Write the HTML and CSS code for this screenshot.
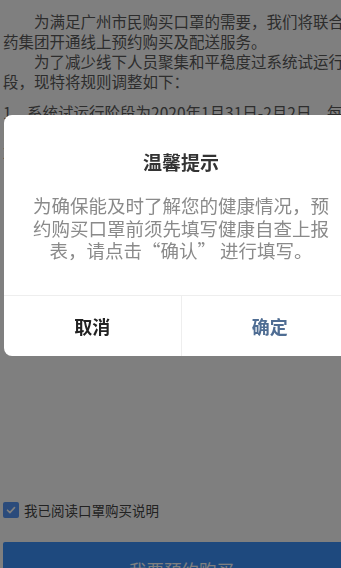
FILE: index.html
```html
<!DOCTYPE html>
<html lang="zh-CN">
<head>
<meta charset="utf-8">
<title>温馨提示</title>
<link rel="stylesheet" href="styles.css">
</head>
<body>
<div class="page">
  <div class="notice">
    <p>为满足广州市民购买口罩的需要，我们将联合广药集团开通线上预约购买及配送服务。</p>
    <p>为了减少线下人员聚集和平稳度过系统试运行阶段，现特将规则调整如下：</p>
  </div>
  <ol class="rules">
    <li>1、系统试运行阶段为2020年1月31日-2月2日，每天限量预约，先到先得。</li>
    <li>2、每人每次限预约一次，每次限购5个。</li>
  </ol>
  <div class="footer">
    <label class="agree">
      <span class="box"><svg viewBox="0 0 16 16" width="16" height="16"><path d="M4.5 8.2l2.4 2.4 4.6-5" fill="none" stroke="#fff" stroke-width="1.6" stroke-linecap="round" stroke-linejoin="round"/></svg></span>
      <span class="agree-text">我已阅读口罩购买说明</span>
    </label>
    <button class="reserve">我要预约购买</button>
  </div>
</div>
<div class="overlay"></div>
<div class="dialog">
  <div class="dialog-body">
    <h2 class="dialog-title">温馨提示</h2>
    <p class="dialog-msg">为确保能及时了解您的健康情况，预约购买口罩前须先填写健康自查上报表，请点击“确认” 进行填写。</p>
  </div>
  <div class="dialog-actions">
    <div class="action cancel">取消</div>
    <div class="action confirm">确定</div>
  </div>
</div>
</body>
</html>
```

FILE: styles.css
```css
html, body {
  margin: 0;
  padding: 0;
}
body {
  width: 341px;
  height: 568px;
  overflow: hidden;
  background: #fff;
  font-family: "Noto Sans CJK SC", "Noto Sans", sans-serif;
}
.page {
  width: 357px;
  height: 585px;
  padding: 11px 3px 0 3px;
  display: flex;
  flex-direction: column;
  color: #5a5a5a;
}
.notice p {
  margin: 0;
  font-size: 15.5px;
  line-height: 20px;
  text-indent: 2em;
}
.rules {
  list-style: none;
  margin: 11px 0 0 0;
  padding: 0;
  font-size: 15.5px;
  line-height: 20px;
}
.footer {
  margin-top: auto;
  display: flex;
  flex-direction: column;
  gap: 24px;
}
.agree {
  display: flex;
  align-items: center;
  gap: 5px;
  height: 16px;
}
.box {
  width: 16px;
  height: 16px;
  border-radius: 2px;
  background: #5696f6;
  display: flex;
}
.agree-text {
  font-size: 13.5px;
  color: #444;
}
.reserve {
  height: 54px;
  border: 0;
  border-radius: 2px;
  background: #3d93fc;
  color: #fff;
  font-family: inherit;
  font-size: 17.5px;
  padding: 0;
}
.overlay {
  position: fixed;
  inset: 0;
  background: rgba(0, 0, 0, 0.5);
}
.dialog {
  position: fixed;
  top: 115px;
  left: 4px;
  width: 354px;
  height: 241px;
  background: #fff;
  border-radius: 8px;
  overflow: hidden;
  display: flex;
  flex-direction: column;
}
.dialog-body {
  flex: 1;
  padding: 35px 27px 0;
  display: flex;
  flex-direction: column;
  gap: 20px;
  text-align: center;
}
.dialog-title {
  margin: 0;
  font-size: 19px;
  line-height: 24px;
  font-weight: 700;
  color: #333;
}
.dialog-msg {
  margin: 0;
  font-size: 18.5px;
  line-height: 22.5px;
  color: #8a8a8a;
}
.dialog-actions {
  height: 60px;
  border-top: 1px solid #eee;
  display: flex;
}
.action {
  flex: 1;
  display: flex;
  align-items: center;
  justify-content: center;
  font-size: 18px;
  font-weight: 700;
}
.cancel {
  color: #222;
}
.confirm {
  color: #4f6d93;
  border-left: 1px solid #eee;
}
```
